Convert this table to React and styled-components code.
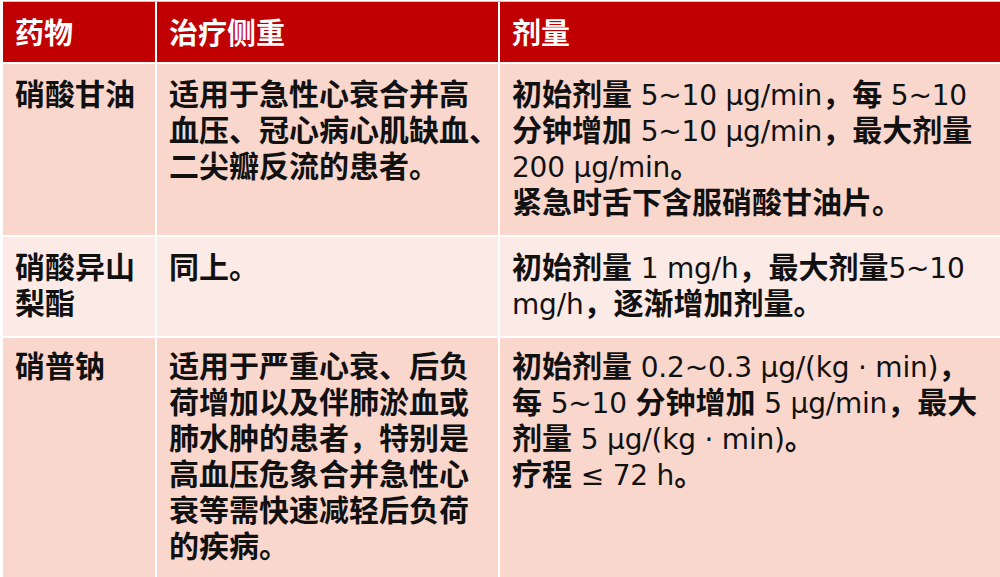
import React from "react";
import styled, { createGlobalStyle } from "styled-components";

const GlobalStyle = createGlobalStyle`
  html, body {
    margin: 0;
    padding: 0;
    background: #ffffff;
    overflow: hidden;
  }
  body {
    font-family: "Noto Sans CJK SC", "Noto Sans", sans-serif;
  }
`;

const Table = styled.div`
  display: grid;
  grid-template-columns: 152px 341px 1fr;
  gap: 2px;
  margin: 1px 0 0 3px;
  border-top: 1px solid #f3b7b0;
  background: #ffffff;
`;

const HeadCell = styled.div`
  background: #c00000;
  color: #ffffff;
  font-weight: 700;
  font-size: 29px;
  line-height: 36px;
  height: 58px;
  display: flex;
  align-items: center;
  padding: 0 12px 2px;
`;

const Cell = styled.div`
  background: ${(p) => (p.$even ? "#fceae6" : "#f9d7cd")};
  color: #111111;
  font-weight: 700;
  font-size: 30px;
  line-height: 36px;
  padding: ${(p) => p.$pad || "10px 12px 17px"};
`;

const Line = styled.div`
  white-space: nowrap;
  height: 36px;
  line-height: 36px;
`;

const Num = styled.span`
  font-family: "DejaVu Sans", "Noto Sans CJK SC", sans-serif;
  font-weight: 400;
  font-size: 28px;
  line-height: 1;
  letter-spacing: -0.2px;
`;

const rows = [
  {
    drug: ["硝酸甘油"],
    focus: ["适用于急性心衰合并高", "血压、冠心病心肌缺血、", "二尖瓣反流的患者。"],
    dose: [
      "初始剂量 5~10 μg/min，每 5~10",
      "分钟增加 5~10 μg/min，最大剂量",
      "200 μg/min。",
      "紧急时舌下含服硝酸甘油片。",
    ],
  },
  {
    drug: ["硝酸异山", "梨酯"],
    focus: ["同上。"],
    dose: ["初始剂量 1 mg/h，最大剂量5~10", "mg/h，逐渐增加剂量。"],
  },
  {
    drug: ["硝普钠"],
    focus: [
      "适用于严重心衰、后负",
      "荷增加以及伴肺淤血或",
      "肺水肿的患者，特别是",
      "高血压危象合并急性心",
      "衰等需快速减轻后负荷",
      "的疾病。",
    ],
    dose: [
      "初始剂量 0.2~0.3 μg/(kg · min)，",
      "每 5~10 分钟增加 5 μg/min，最大",
      "剂量 5 μg/(kg · min)。",
      "疗程 ≤ 72 h。",
    ],
    pad: "8px 12px 30px",
  },
];

// wrap the latin runs so they get the lighter western face
const renderText = (text) =>
  text.split(/([\u0000-\u2fff]+)/).map((part, i) =>
    /^[\u0000-\u2fff]+$/.test(part) ? <Num key={i}>{part}</Num> : part
  );

const Lines = ({ lines }) =>
  lines.map((l, i) => <Line key={i}>{renderText(l)}</Line>);

export default function App() {
  return (
    <>
      <GlobalStyle />
      <Table>
        <HeadCell>药物</HeadCell>
        <HeadCell>治疗侧重</HeadCell>
        <HeadCell>剂量</HeadCell>
        {rows.map((r, i) => (
          <React.Fragment key={i}>
            <Cell $even={i % 2 === 1} $pad={r.pad}>
              <Lines lines={r.drug} />
            </Cell>
            <Cell $even={i % 2 === 1} $pad={r.pad}>
              <Lines lines={r.focus} />
            </Cell>
            <Cell $even={i % 2 === 1} $pad={r.pad}>
              <Lines lines={r.dose} />
            </Cell>
          </React.Fragment>
        ))}
      </Table>
    </>
  );
}
